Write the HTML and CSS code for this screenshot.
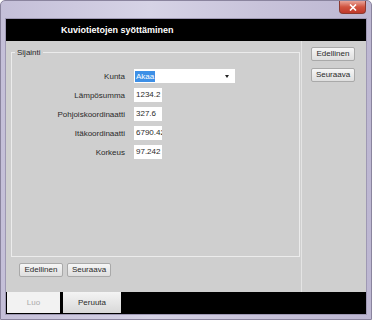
FILE: index.html
```html
<!DOCTYPE html>
<html>
	<head>
		<meta charset="utf-8">
		<title>Kuviotietojen syöttäminen</title>
		<link rel="stylesheet" href="styles.css">
	</head>
	<body>
		<div class="window">
			<!--ikkunan otsikkopalkki-->
			<div class="caption">
				<span class="close">
					<svg width="8" height="7" viewBox="0 0 8 7">
						<path d="M1 0.5 L7 6.5 M7 0.5 L1 6.5" stroke="#fff" stroke-width="1.6" />
					</svg>
				</span>
			</div>

			<div class="client">
				<div class="header">Kuviotietojen syöttäminen</div>

				<div class="content">
					<div class="main">
						<fieldset class="group">
							<legend>Sijainti</legend>
							<div class="form">
								<label>Kunta</label>
								<div class="combo">
									<span class="sel">Akaa</span>
									<i class="arrow"></i>
								</div>
								<label>Lämpösumma</label>
								<span class="field">1234.2</span>
								<label>Pohjoiskoordinaatti</label>
								<span class="field">327.6</span>
								<label>Itäkoordinaatti</label>
								<span class="field">6790.42</span>
								<label>Korkeus</label>
								<span class="field">97.242</span>
							</div>
						</fieldset>
						<div class="nav">
							<a href="#" class="btn">Edellinen</a>
							<a href="#" class="btn">Seuraava</a>
						</div>
					</div>
					<div class="side">
						<a href="#" class="btn">Edellinen</a>
						<a href="#" class="btn">Seuraava</a>
					</div>
				</div>

				<div class="footer">
					<a href="#" class="tab disabled">Luo</a>
					<a href="#" class="tab">Peruuta</a>
				</div>
			</div>
		</div>
	</body>
</html>
```

FILE: styles.css
```css
* {
	margin: 0;
	padding: 0;
	box-sizing: border-box;
}

body {
	width: 372px;
	height: 320px;
	overflow: hidden;
	font-family: "Liberation Sans", Arial, sans-serif;
	font-size: 8px;
	color: #2a2a2a;
}

.window {
	width: 372px;
	height: 320px;
	background: linear-gradient(to right, #c4bfd8, #d6d3e6 40%, #c8c3da 70%, #bdb7d2);
	border: 1px solid #8a849e;
	border-radius: 5px 5px 0 0;
	padding: 0 4px 4px 4px;
	display: flex;
	flex-direction: column;
}

.caption {
	height: 17px;
	display: flex;
	justify-content: flex-end;
	padding-right: 1px;
}

.caption .close {
	width: 27px;
	height: 13px;
	background: linear-gradient(#e9a59a, #d0533f 50%, #c0392b);
	border: 1px solid #8c3a30;
	border-top: none;
	border-radius: 0 0 4px 4px;
	display: flex;
	align-items: center;
	justify-content: center;
}

.client {
	flex: 1;
	display: flex;
	flex-direction: column;
	border: 1px solid #9e98b3;
}

.header {
	height: 22px;
	background: #000;
	color: #fff;
	font-weight: bold;
	font-size: 9px;
	line-height: 22px;
	padding-left: 55px;
}

.content {
	flex: 1;
	background: #cfcfcf;
	display: flex;
}

.main {
	width: 296px;
	border-right: 1px solid #e4e4e4;
	padding: 7px 0 0 5px;
}

.group {
	width: 289px;
	height: 209px;
	border: 1px solid #ececec;
	padding: 0;
}

.group legend {
	margin-left: 3px;
	padding: 0 2px;
}

.form {
	display: grid;
	grid-template-columns: 113px 101px;
	column-gap: 9px;
	row-gap: 5px;
	padding-top: 12px;
	align-items: center;
}

.form label {
	text-align: right;
}

.combo {
	height: 14px;
	background: #fff;
	display: flex;
	align-items: center;
	padding: 0 6px 0 1px;
	justify-content: space-between;
}

.combo .sel {
	background: #3d8fe6;
	color: #fff;
	padding: 0 1px;
	line-height: 11px;
}

.combo .arrow {
	width: 0;
	height: 0;
	border-left: 2.5px solid transparent;
	border-right: 2.5px solid transparent;
	border-top: 3px solid #222;
}

.field {
	width: 28px;
	height: 14px;
	line-height: 14px;
	background: #fff;
	padding-left: 2px;
	white-space: nowrap;
	overflow: hidden;
}

.nav {
	display: flex;
	gap: 4px;
	padding: 6px 0 0 8px;
}

.btn {
	display: block;
	width: 44px;
	height: 14px;
	line-height: 12px;
	text-align: center;
	text-decoration: none;
	color: #2a2a2a;
	background: linear-gradient(#f6f6f6, #dedede);
	border: 1px solid #a9a9a9;
	border-radius: 2px;
}

.side {
	display: flex;
	flex-direction: column;
	gap: 7px;
	padding: 6px 0 0 9px;
}

.footer {
	height: 22px;
	background: #000;
	display: flex;
	gap: 3px;
	padding: 0 0 1px 1px;
}

.tab {
	width: 53px;
	line-height: 21px;
	text-align: center;
	text-decoration: none;
	color: #2a2a2a;
	background: linear-gradient(#f4f4f4, #d8d8d8);
}

.tab.disabled {
	background: #f2f2f2;
	color: #aaa;
}

.tab + .tab {
	width: 58px;
}
```
